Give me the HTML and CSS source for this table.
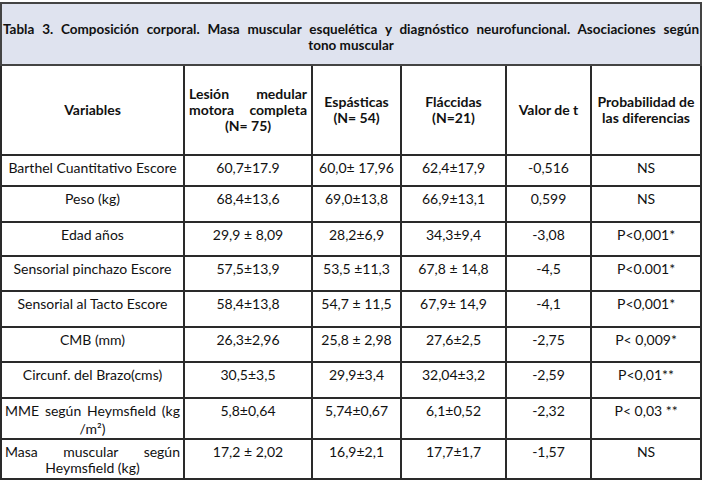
FILE: index.html
```html
<!DOCTYPE html>
<html lang="es">
<head>
<meta charset="utf-8">
<title>Tabla 3</title>
<link rel="stylesheet" href="styles.css">
</head>
<body>
<table class="tbl">
  <colgroup>
    <col class="c1"><col class="c2"><col class="c3"><col class="c4"><col class="c5"><col class="c6">
  </colgroup>
  <thead>
    <tr class="r-title">
      <th colspan="6" class="title">Tabla 3. Composición corporal. Masa muscular esquelética y diagnóstico neurofuncional. Asociaciones según tono&nbsp;muscular</th>
    </tr>
    <tr class="r-head">
      <th>Variables</th>
      <th class="just">Lesión medular motora completa (N= 75)</th>
      <th>Espásticas<br>(N= 54)</th>
      <th>Fláccidas<br>(N=21)</th>
      <th>Valor de t</th>
      <th>Probabilidad de las diferencias</th>
    </tr>
  </thead>
  <tbody>
    <tr class="r1"><td>Barthel Cuantitativo Escore</td><td>60,7±17.9</td><td>60,0± 17,96</td><td>62,4±17,9</td><td>-0,516</td><td>NS</td></tr>
    <tr class="r2"><td>Peso (kg)</td><td>68,4±13,6</td><td>69,0±13,8</td><td>66,9±13,1</td><td>0,599</td><td>NS</td></tr>
    <tr class="r3"><td>Edad años</td><td>29,9 ± 8,09</td><td>28,2±6,9</td><td>34,3±9,4</td><td>-3,08</td><td>P&lt;0,001*</td></tr>
    <tr class="r4"><td>Sensorial pinchazo Escore</td><td>57,5±13,9</td><td>53,5 ±11,3</td><td>67,8 ± 14,8</td><td>-4,5</td><td>P&lt;0.001*</td></tr>
    <tr class="r5"><td>Sensorial al Tacto Escore</td><td>58,4±13,8</td><td>54,7 ± 11,5</td><td>67,9± 14,9</td><td>-4,1</td><td>P&lt;0,001*</td></tr>
    <tr class="r6"><td>CMB (mm)</td><td>26,3±2,96</td><td>25,8 ± 2,98</td><td>27,6±2,5</td><td>-2,75</td><td>P&lt; 0,009*</td></tr>
    <tr class="r7"><td>Circunf. del Brazo(cms)</td><td>30,5±3,5</td><td>29,9±3,4</td><td>32,04±3,2</td><td>-2,59</td><td>P&lt;0,01**</td></tr>
    <tr class="r8"><td class="just">MME según Heymsfield (kg /m²)</td><td>5,8±0,64</td><td>5,74±0,67</td><td>6,1±0,52</td><td>-2,32</td><td>P&lt; 0,03 **</td></tr>
    <tr class="r9"><td class="just">Masa muscular según Heymsfield (kg)</td><td>17,2 ± 2,02</td><td>16,9±2,1</td><td>17,7±1,7</td><td>-1,57</td><td>NS</td></tr>
  </tbody>
</table>
</body>
</html>
```
FILE: styles.css
```css
html, body {
  margin: 0;
  padding: 0;
  background: #ffffff;
}

body {
  font-family: Lato, "Open Sans", sans-serif;
  font-size: 14px;
  color: #111111;
}

.tbl {
  margin-top: 2px;
  width: 700px;
  border-collapse: collapse;
  table-layout: fixed;
}

.c1 { width: 183px; }
.c2 { width: 128px; }
.c3 { width: 89px; }
.c4 { width: 105px; }
.c5 { width: 85px; }
.c6 { width: 110px; }

.tbl th,
.tbl td {
  border: 2px solid #2a2a2a;
  text-align: center;
  line-height: 16px;
}

.tbl td {
  vertical-align: top;
  padding: 4px 3px 0;
}

.tbl th {
  vertical-align: middle;
  padding: 0 4px;
  font-weight: bold;
}

.tbl th.title {
  background: #dfe3ef;
  text-align: justify;
  text-align-last: center;
  font-size: 13.5px;
  padding: 17px 1px 7px;
  height: 36px;
  vertical-align: top;
  border-color: #444;
}

.just {
  text-align: justify !important;
  text-align-last: center;
}

.r-head th { height: 88px; }
.r1 td { height: 25px; }
.r2 td { height: 30px; }
.r3 td { height: 28px; }
.r4 td { height: 29px; }
.r5 td { height: 30px; }
.r6 td { height: 29px; }
.r7 td { height: 30px; }
.r8 td { height: 36px; line-height: 18px; padding-top: 3px; }
.r9 td { height: 34px; }
```
